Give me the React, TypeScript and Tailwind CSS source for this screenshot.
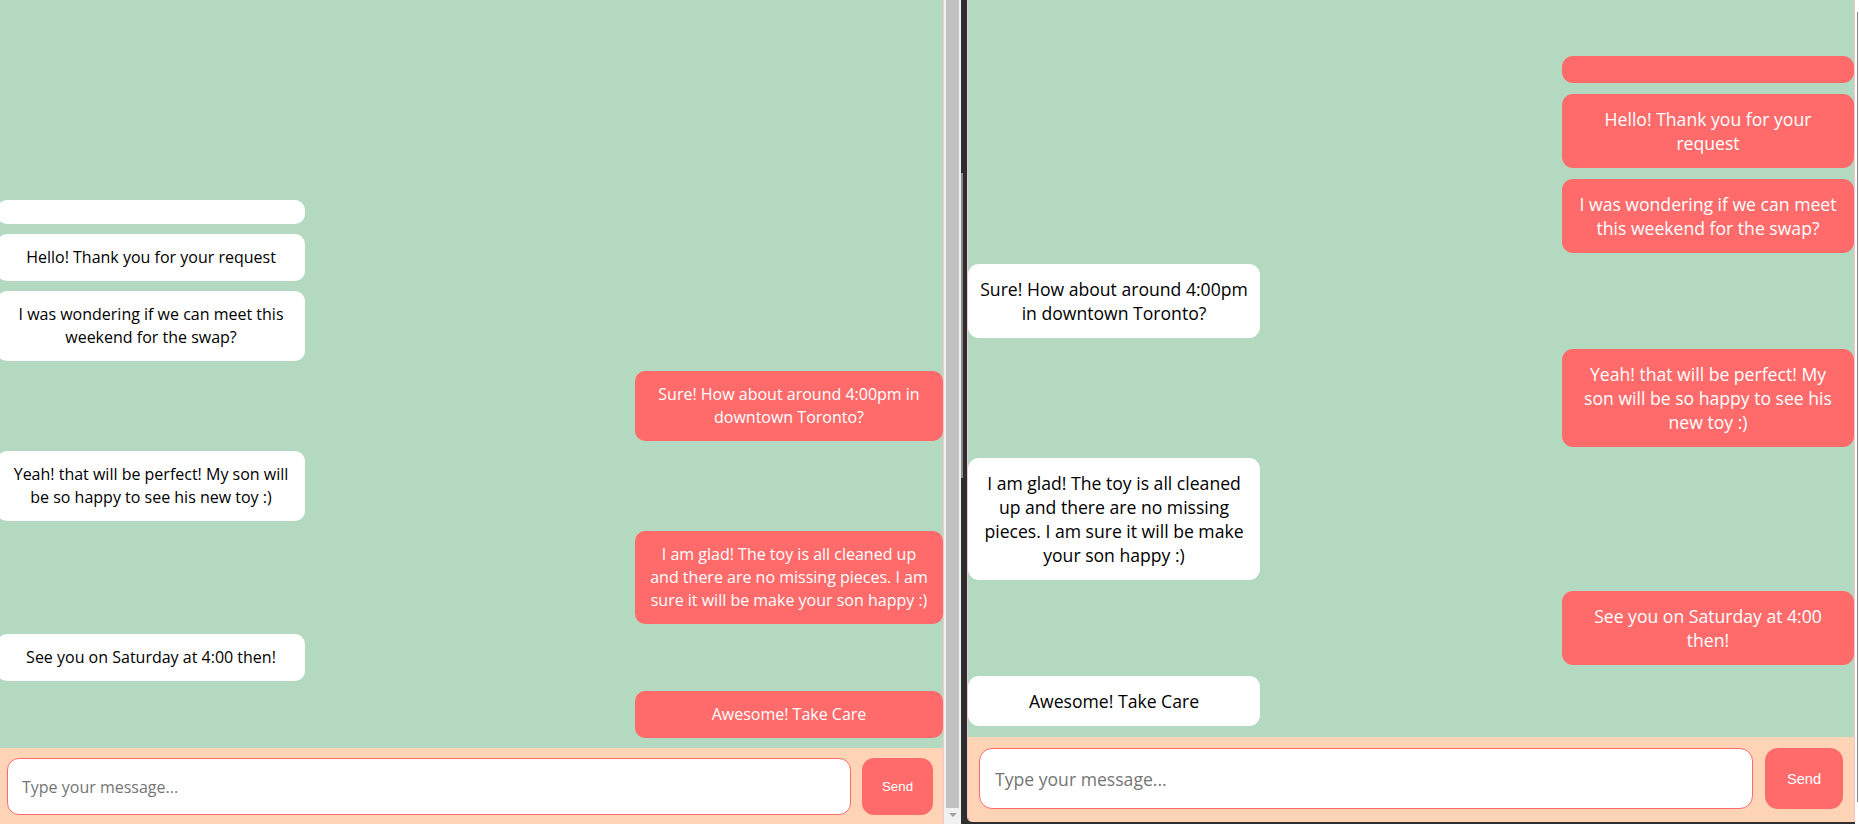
import * as React from "react";

type Message = {
  from: "a" | "b";
  text: string;
};

const messages: Message[] = [
  { from: "a", text: "" },
  { from: "a", text: "Hello! Thank you for your request" },
  { from: "a", text: "I was wondering if we can meet this weekend for the swap?" },
  { from: "b", text: "Sure! How about around 4:00pm in downtown Toronto?" },
  { from: "a", text: "Yeah! that will be perfect! My son\u00a0will be so happy to see his new toy :)" },
  {
    from: "b",
    text: "I am glad! The toy is all cleaned up and there are no missing pieces. I am sure it will be make your son happy :)",
  },
  { from: "a", text: "See you on Saturday at 4:00 then!" },
  { from: "b", text: "Awesome! Take Care" },
];

// two windows side by side, the right one is zoomed to 110%
const sizes = {
  normal: {
    list: "gap-[10px] pb-[10px]",
    bubble: "w-[308px] min-h-[23px] rounded-[10px] px-[12px] py-[12px] text-[16px] leading-[23px]",
    footer: "h-[76px] gap-[11px] px-[10px] pt-[10px]",
    input: "h-[57px] rounded-[12px] px-[14px] text-[16px]",
    send: "w-[71px] h-[57px] rounded-[12px] text-[13.33px]",
  },
  zoomed: {
    list: "gap-[11px] pb-[11px]",
    bubble: "w-[292px] min-h-[27px] rounded-[11px] px-[10.75px] py-[13px] text-[17.6px] leading-[24px]",
    footer: "h-[85px] gap-[12px] px-[11px] pt-[11px]",
    input: "h-[61px] rounded-[13px] px-[15px] text-[17.6px]",
    send: "w-[78px] h-[61px] rounded-[13px] text-[14.67px]",
  },
};

type ChatWindowType = {
  me: "a" | "b";
  size: "normal" | "zoomed";
};

const ChatWindow = ({ me, size }: ChatWindowType) => {
  const [draft, setDraft] = React.useState("");
  const s = sizes[size];

  return (
    <div className="flex h-full flex-col">
      <div className={`flex flex-1 flex-col justify-end bg-[#b3dac0] ${s.list}`}>
        {messages.map((m, i) => (
          <div
            key={i}
            className={`${s.bubble} text-center ${
              m.from === me
                ? "self-end bg-[#ff6b6b] text-white"
                : "self-start bg-white text-black"
            }`}
          >
            {m.text}
          </div>
        ))}
      </div>
      <div className={`flex shrink-0 items-start bg-[#ffd3b6] ${s.footer}`}>
        <input
          value={draft}
          onChange={(e) => setDraft(e.target.value)}
          placeholder="Type your message..."
          className={`min-w-0 flex-1 border border-[#ff6b6b] bg-white text-black outline-none placeholder:text-[#757575] ${s.input}`}
        />
        <button
          className={`shrink-0 bg-[#ff6b6b] font-['Liberation_Sans',Arial,sans-serif] text-white ${s.send}`}
          onClick={() => setDraft("")}
        >
          Send
        </button>
      </div>
    </div>
  );
};

export default function App() {
  return (
    <div className="flex h-[824px] w-[1859px] overflow-hidden bg-[#2e2e2e] font-['Open_Sans',sans-serif]">
      {/* left window, scrolled a little to the right */}
      <div className="-ml-[3px] h-full w-[947px] shrink-0 border-r border-[#f7c6ca]">
        <ChatWindow me="b" size="normal" />
      </div>

      {/* left window scrollbar */}
      <div className="flex h-full w-[17px] shrink-0 flex-col items-center bg-[#f1f1f1]">
        <div className="h-[808px] w-[13px] bg-[#c1c1c1]" />
        <div className="mt-[5px] h-0 w-0 border-x-[4px] border-t-[4px] border-x-transparent border-t-[#a3a3a3]" />
      </div>

      {/* gap between windows */}
      <div className="h-full w-[6px] shrink-0 pt-[173px]">
        <div className="h-[305px] w-[2px] bg-[#8a8a8a]" />
      </div>

      {/* right window */}
      <div className="h-[822px] w-[888px] shrink-0 overflow-hidden rounded-bl-[5px] border-x border-[#f7c6ca]">
        <ChatWindow me="a" size="zoomed" />
      </div>

      <div className="h-full w-[4px] shrink-0 bg-white pl-[2px] pt-[12px]">
        <div className="h-[790px] w-[1px] bg-[#8a8a8a]" />
      </div>
    </div>
  );
}
